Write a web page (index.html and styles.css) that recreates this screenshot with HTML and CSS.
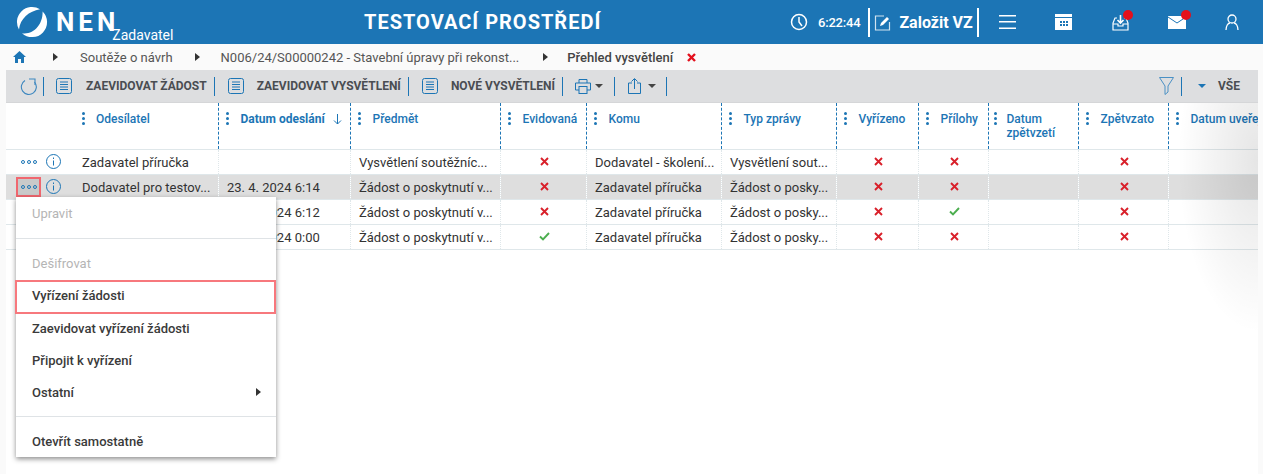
FILE: index.html
```html
<!DOCTYPE html>
<html lang="cs">
<head>
  <meta charset="UTF-8">
  <title>Přehled vysvětlení</title>
  <link rel="stylesheet" href="styles.css">
</head>
<body>
  <header class="topbar">
    <div class="brand">
      <svg class="logo" width="32" height="32" viewBox="0 0 32 32" fill="#fff"><path d="M24 3.300A15 15 0 0 0 3 23.500C4 13 13 5 24 3.300z"/><path d="M26.600 5.400A15 15 0 0 1 6 27.200C18 29 27 18 26.600 5.400z"/></svg>
      <span class="brand-name">NEN</span>
      <span class="brand-role">Zadavatel</span>
    </div>
    <div class="env">TESTOVACÍ PROSTŘEDÍ</div>
    <div class="top-tools">
      <svg class="clock" width="18" height="18" viewBox="0 0 18 18" fill="none" stroke="#fff" stroke-width="1.500"><circle cx="9" cy="9" r="7.500"/><path d="M9 4v5l3 4"/></svg>
      <span class="time">6:22:44</span>
      <div class="new-vz">
        <svg width="17" height="17" viewBox="0 0 17 17" fill="none"><path d="M10 2H1.500v14h14V8" stroke="#fff" stroke-width="1.200" opacity=".8"/><path d="M6 12l1-3 6-6 2 2-6 6z" fill="#fff"/></svg>
        <span>Založit VZ</span>
      </div>
      <svg class="ti menu-ic" width="17" height="16" viewBox="0 0 17 16" fill="#fff"><rect y="1" width="17" height="1.500"/><rect y="7" width="17" height="1.500"/><rect y="13.500" width="17" height="1.500"/></svg>
      <svg class="ti cal-ic" width="17" height="16" viewBox="0 0 17 16"><rect width="17" height="16" fill="#fff"/><rect y="3" width="17" height="1" fill="#1c75b5"/><g fill="#1c75b5"><rect x="5" y="7" width="2" height="2"/><rect x="8" y="7" width="2" height="2"/><rect x="11" y="7" width="2" height="2"/><rect x="5" y="10" width="2" height="2"/><rect x="8" y="10" width="2" height="2"/><rect x="11" y="10" width="2" height="2"/></g></svg>
      <div class="ti inbox-ic">
        <svg width="17" height="17" viewBox="0 0 17 17" fill="none" stroke="#fff" stroke-width="1.200"><path d="M5 4H3L1 9v7h15V9l-2-5h-2"/><path d="M1 10h5v2h5v-2h5"/><path d="M8.500 1v8M5.500 6l3 3 3-3" stroke-width="1.600"/></svg>
        <i class="dot"></i>
      </div>
      <div class="ti mail-ic">
        <svg width="18" height="13" viewBox="0 0 18 13"><path d="M0 0h18v13H0z" fill="#fff"/><path d="M0 1l9 6 9-6" fill="none" stroke="#1c75b5" stroke-width="1"/></svg>
        <i class="dot"></i>
      </div>
      <svg class="ti user-ic" width="14" height="16" viewBox="0 0 14 16" fill="none" stroke="#fff" stroke-width="1.300"><circle cx="7" cy="5" r="4"/><path d="M1 16c0-4 2-7 4-7M13 16c0-4-2-7-4-7"/></svg>
    </div>
  </header>

  <nav class="crumbs">
    <svg class="home" width="13" height="12" viewBox="0 0 13 12" fill="#1c75b5"><path d="M6.500 0L13 6h-2v6H8V8H5v4H2V6H0z"/></svg>
    <i class="tri"></i>
    <span class="crumb c1">Soutěže o návrh</span>
    <i class="tri"></i>
    <span class="crumb c2">N006/24/S00000242 - Stavební úpravy při rekonst...</span>
    <i class="tri"></i>
    <strong class="crumb c3">Přehled vysvětlení</strong>
    <svg class="cross-red" width="9" height="9" viewBox="0 0 9 9"><path d="M1 1l7 7M8 1L1 8" stroke="#e3101c" stroke-width="2.400"/></svg>
  </nav>

  <main class="content">
    <div class="toolbar">
      <svg class="tb-ic refresh" width="18" height="18" viewBox="0 0 18 18" fill="none" stroke="#3d87bf" stroke-width="1.100"><path d="M14.500 5A7.500 7.500 0 1 1 5 3.500"/><path d="M9 2h6v6"/></svg>
      <i class="sep"></i>
      <svg class="tb-ic doc doc-first" width="16" height="16" viewBox="0 0 16 16" fill="none" stroke="#1c75b5" stroke-width="1"><rect x=".5" y=".5" width="15" height="15" rx="2"/><path d="M4 4h8M4 6.500h8M4 9h8M4 11.500h8"/></svg>
      <span class="tb-label">ZAEVIDOVAT ŽÁDOST</span>
      <i class="sep"></i>
      <svg class="tb-ic doc" width="16" height="16" viewBox="0 0 16 16" fill="none" stroke="#1c75b5" stroke-width="1"><rect x=".5" y=".5" width="15" height="15" rx="2"/><path d="M4 4h8M4 6.500h8M4 9h8M4 11.500h8"/></svg>
      <span class="tb-label">ZAEVIDOVAT VYSVĚTLENÍ</span>
      <i class="sep"></i>
      <svg class="tb-ic doc" width="16" height="16" viewBox="0 0 16 16" fill="none" stroke="#1c75b5" stroke-width="1"><rect x=".5" y=".5" width="15" height="15" rx="2"/><path d="M4 4h8M4 6.500h8M4 9h8M4 11.500h8"/></svg>
      <span class="tb-label">NOVÉ VYSVĚTLENÍ</span>
      <i class="sep"></i>
      <svg class="tb-ic print" width="16" height="15" viewBox="0 0 16 15" fill="none" stroke="#1c75b5" stroke-width="1"><path d="M4 4V.5h8V4M4 11H.5V4h15v7H12"/><rect x="4" y="7.500" width="8" height="7"/></svg>
      <i class="caret"></i>
      <i class="sep"></i>
      <svg class="tb-ic share" width="13" height="16" viewBox="0 0 13 16" fill="none" stroke="#1c75b5" stroke-width="1"><path d="M4 5H.5v10.500h12V5H9"/><path d="M6.500 11V1M3.500 3.500l3-3 3 3"/></svg>
      <i class="caret"></i>
      <i class="sep"></i>
      <div class="tb-right">
        <svg class="funnel" width="15" height="18" viewBox="0 0 15 18" fill="none" stroke="#4a90c4" stroke-width="1"><path d="M.5.500h14L9 9v6l-3 2.500V9z"/></svg>
        <i class="sep"></i>
        <i class="caret blue"></i>
        <span class="tb-label vse">VŠE</span>
      </div>
    </div>

    <div class="grid-wrap">
      <table class="grid">
        <colgroup>
          <col class="w-act"><col class="w-send"><col class="w-date"><col class="w-subj"><col class="w-evid"><col class="w-komu"><col class="w-type"><col class="w-vyr"><col class="w-pril"><col class="w-dz"><col class="w-zpet"><col class="w-du">
        </colgroup>
        <thead>
          <tr>
            <th class="no-line"></th>
            <th><i class="dots"></i>Odesílatel</th>
            <th class="sorted"><i class="dots"></i>Datum odeslání<svg class="arrow" width="9" height="11" viewBox="0 0 9 11" fill="none" stroke="#1c75b5"><path d="M4.500 0v10M1 6.500l3.500 3.500 3.500-3.500"/></svg></th>
            <th><i class="dots"></i>Předmět</th>
            <th><i class="dots"></i>Evidovaná</th>
            <th><i class="dots"></i>Komu</th>
            <th><i class="dots"></i>Typ zprávy</th>
            <th><i class="dots"></i>Vyřízeno</th>
            <th><i class="dots"></i>Přílohy</th>
            <th class="narrow"><i class="dots"></i>Datum<br>zpětvzetí</th>
            <th><i class="dots"></i>Zpětvzato</th>
            <th><i class="dots"></i>Datum uveřejnění</th>
          </tr>
        </thead>
        <tbody id="rows"></tbody>
      </table>
    </div>
    <div class="fade"></div>
  </main>

  <div class="ctx-menu">
    <div class="ctx-item off first">Upravit</div>
    <hr>
    <div class="ctx-item off second">Dešifrovat</div>
    <div class="ctx-item marked">Vyřízení žádosti</div>
    <div class="ctx-item">Zaevidovat vyřízení žádosti</div>
    <div class="ctx-item">Připojit k vyřízení</div>
    <div class="ctx-item more">Ostatní<i class="tri"></i></div>
    <hr>
    <div class="ctx-item last">Otevřít samostatně</div>
  </div>

  <script>
    const data = [
      ['Zadavatel příručka', '', 'Vysvětlení soutěžníc...', 0, 'Dodavatel - školení...', 'Vysvětlení sout...', 0, 0, 0],
      ['Dodavatel pro testov...', '23. 4. 2024 6:14', 'Žádost o poskytnutí v...', 0, 'Zadavatel příručka', 'Žádost o posky...', 0, 0, 0],
      ['', '23. 4. 2024 6:12', 'Žádost o poskytnutí v...', 0, 'Zadavatel příručka', 'Žádost o posky...', 0, 1, 0],
      ['', '23. 4. 2024 0:00', 'Žádost o poskytnutí v...', 1, 'Zadavatel příručka', 'Žádost o posky...', 0, 0, 0]
    ];
    const no = '<svg width="9" height="9" viewBox="0 0 9 9"><path d="M1 1l7 7M8 1L1 8" stroke="#d9202a" stroke-width="1.900"/></svg>';
    const yes = '<svg width="11" height="9" viewBox="0 0 11 9"><path d="M1 4.500l3 3 6-6.500" fill="none" stroke="#4cae4f" stroke-width="1.900"/></svg>';
    const info = '<svg width="15" height="15" viewBox="0 0 15 15" fill="none" stroke="#1c75b5"><circle cx="7.500" cy="7.500" r="7"/><path d="M7.500 6.500v5M7.500 3.500v1.500"/></svg>';
    const mark = v => v ? yes : no;

    document.getElementById('rows').innerHTML = data.map((r, i) => `
      <tr class="${i === 1 ? 'selected' : ''}">
        <td class="act"><span class="more-btn ${i === 1 ? 'active' : ''}"><i></i><i></i><i></i></span>${info}</td>
        <td>${r[0]}</td><td class="date">${r[1]}</td><td>${r[2]}</td>
        <td class="mid">${mark(r[3])}</td><td>${r[4]}</td><td>${r[5]}</td>
        <td class="mid">${mark(r[6])}</td><td class="mid">${mark(r[7])}</td><td></td>
        <td class="mid">${mark(r[8])}</td><td></td>
      </tr>`).join('');
  </script>
</body>
</html>
```

FILE: styles.css
```css
* {
  box-sizing: border-box;
}
html, body {
  height: 100%;
  overflow: hidden;
}
body {
  margin: 0;
  background: #fafafa;
  color: #333;
  font-family: Roboto, "Liberation Sans", sans-serif;
  font-size: 13px;
  position: relative;
}

/* top bar */
.topbar {
  height: 44px;
  background: #1c75b5;
  color: #fff;
  display: flex;
  align-items: center;
}
.brand {
  display: flex;
  align-items: center;
  height: 44px;
  padding-left: 16px;
  width: 364px;
}
.brand-name {
  font-size: 26px;
  font-weight: 700;
  letter-spacing: 4px;
  margin-left: 8px;
  margin-top: -1px;
}
.brand-role {
  font-size: 14px;
  align-self: flex-end;
  margin-left: -7px;
  margin-bottom: 1px;
}
.env {
  font-size: 20px;
  font-weight: 700;
  letter-spacing: 1px;
  white-space: nowrap;
  width: 426px;
}
.top-tools {
  display: flex;
  align-items: center;
  flex: 1;
}
.clock {
  margin-right: 10px;
}
.time {
  font-size: 13px;
  font-weight: 500;
  letter-spacing: -.2px;
  margin-right: 8px;
}
.new-vz {
  display: flex;
  align-items: center;
  gap: 8px;
  height: 29px;
  border-left: 2px solid #fff;
  border-right: 2px solid #fff;
  padding: 0 4px;
  font-size: 16px;
  font-weight: 700;
  white-space: nowrap;
}
.ti {
  position: relative;
  display: block;
}
.ti svg {
  display: block;
}
.menu-ic {
  margin-left: 20px;
}
.cal-ic,
.mail-ic,
.user-ic {
  margin-left: 39px;
}
.inbox-ic {
  margin-left: 40px;
  height: 17px;
}
.mail-ic {
  height: 13px;
}
.dot {
  position: absolute;
  top: -4px;
  right: -4px;
  width: 10px;
  height: 10px;
  border-radius: 50%;
  background: #e3101c;
}
.mail-ic .dot {
  top: -6px;
  right: -5px;
}

/* breadcrumb */
.crumbs {
  height: 26px;
  background: #fafafa;
  display: flex;
  align-items: center;
  padding-left: 13px;
  font-size: 13px;
  color: #555;
}
.home {
  margin-right: 27px;
}
.tri {
  width: 0;
  height: 0;
  border-left: 5px solid #333;
  border-top: 4px solid transparent;
  border-bottom: 4px solid transparent;
}
.crumb {
  white-space: nowrap;
}
.c1 {
  margin: 0 22px;
}
.c2 {
  margin: 0 24px 0 21px;
}
.c3 {
  margin-left: 19px;
  font-weight: 500;
  color: #444;
}
.cross-red {
  margin-left: 14px;
}

/* page content */
.content {
  margin: 0 5px 0 6px;
  height: calc(100vh - 70px);
  background: #fff;
  position: relative;
}

/* toolbar */
.toolbar {
  height: 33px;
  background: #dddee0;
  display: flex;
  align-items: center;
  padding-left: 14px;
  border-bottom: 1px solid #d5d6d8;
}
.sep {
  width: 1px;
  height: 19px;
  background: #1c75b5;
}
.tb-ic {
  flex: none;
}
.refresh {
  margin-right: 5px;
}
.doc {
  margin: 0 13px;
}
.doc-first {
  margin: 0 14px 0 12px;
}
.tb-label {
  font-size: 12px;
  font-weight: 700;
  color: #4a4d52;
  white-space: nowrap;
  margin-right: 7px;
}
.print {
  margin-left: 12px;
}
.share {
  margin-left: 13px;
}
.caret {
  width: 0;
  height: 0;
  border-top: 4px solid #444;
  border-left: 4px solid transparent;
  border-right: 4px solid transparent;
  margin: 0 11px 0 4px;
}
.share + .caret {
  margin: 0 10px 0 7px;
}
.caret.blue {
  border-top-color: #1c75b5;
  margin: 0 12px 0 16px;
}
.tb-right {
  margin-left: auto;
  display: flex;
  align-items: center;
}
.funnel {
  margin-right: 7px;
}
.vse {
  margin-right: 18px;
}

/* grid */
.grid-wrap {
  overflow: hidden;
  height: 147px;
}
.grid {
  border-collapse: collapse;
  table-layout: fixed;
  width: 1362px;
}
.w-act { width: 67px; }
.w-send { width: 145px; }
.w-date { width: 132px; }
.w-subj { width: 150px; }
.w-evid { width: 86px; }
.w-komu { width: 135px; }
.w-type { width: 115px; }
.w-vyr { width: 82px; }
.w-pril { width: 70px; }
.w-dz { width: 90px; }
.w-zpet { width: 90px; }
.w-du { width: 200px; }

.grid th {
  height: 46px;
  vertical-align: top;
  text-align: left;
  font-size: 12px;
  font-weight: 500;
  line-height: 14px;
  color: #1c75b5;
  padding: 9px 4px 0 22px;
  border-right: 1px dashed #1c75b5;
  border-bottom: 1px solid #dfe7ea;
  position: relative;
  white-space: nowrap;
}
.grid th.no-line {
  border-right: 0;
}
.grid th:nth-child(2) {
  padding-left: 23px;
}
.grid th.narrow {
  padding-left: 18px;
}
.grid th.sorted {
  font-weight: 700;
}
.arrow {
  margin-left: 8px;
  vertical-align: -2px;
}
.dots,
.dots::before,
.dots::after {
  position: absolute;
  width: 3px;
  height: 3px;
  border-radius: 50%;
  background: #1c75b5;
}
.dots {
  left: 7px;
  top: 14px;
}
.grid th:nth-child(2) .dots {
  left: 9px;
}
.grid th.narrow .dots {
  left: 5px;
}
.dots::before {
  content: "";
  top: -5px;
  left: 0;
}
.dots::after {
  content: "";
  top: 5px;
  left: 0;
}
.grid td {
  height: 25px;
  padding: 2px 8.5px 0;
  font-size: 13px;
  color: #333;
  white-space: nowrap;
  overflow: hidden;
  border-bottom: 1px solid #dfe7ea;
  border-right: 1px dotted #dfe7ea;
}
.grid td:first-child {
  border-right: 0;
}
.grid td:nth-child(2) {
  padding-left: 9px;
}
.grid td.mid {
  text-align: center;
  padding: 0 0 0 2px;
}
.selected td {
  background: #dedede;
  border-top: 1px solid #b5b5b5;
}
.grid td.act {
  padding: 0;
}
.act svg {
  vertical-align: middle;
  margin-left: 5px;
}
.more-btn {
  display: inline-flex;
  align-items: center;
  justify-content: center;
  gap: 2px;
  width: 25px;
  height: 20px;
  margin-left: 10px;
  vertical-align: middle;
}
.more-btn i {
  width: 4px;
  height: 4px;
  border: 1px solid #1c75b5;
  border-radius: 50%;
}
.more-btn.active {
  background: #c9c9c9;
  outline: 2px solid #f0676f;
  outline-offset: -2px;
}
.fade {
  position: absolute;
  top: 33px;
  right: 0;
  width: 80px;
  height: 230px;
  background: radial-gradient(ellipse 100% 75% at 100% 25%, rgba(0, 0, 0, .1), rgba(0, 0, 0, 0));
  pointer-events: none;
}

/* context menu */
.ctx-menu {
  position: absolute;
  left: 16px;
  top: 197px;
  width: 260px;
  height: 260px;
  background: #fff;
  box-shadow: 0 2px 5px rgba(0, 0, 0, .45);
  font-size: 13px;
  color: #3a3a3a;
}
.ctx-menu hr {
  border: 0;
  border-top: 1px solid #dfe3e6;
  margin: 0;
}
.ctx-item {
  height: 32px;
  display: flex;
  align-items: center;
  padding: 0 16px;
  font-weight: 500;
}
.ctx-item.off {
  color: #b5b5b5;
  font-weight: 400;
}
.ctx-item.first {
  margin-bottom: 9px;
}
.ctx-item.second {
  margin-top: 8px;
}
.ctx-item.marked {
  margin: 1px 0 -2px -1px;
  padding: 0 0 3px 15px;
  width: 261px;
  height: 34px;
  border: 2px solid #f7787d;
}
.more {
  justify-content: space-between;
  padding-right: 15px;
  margin-bottom: 8px;
}
.ctx-item.last {
  margin-top: 8px;
}
```
